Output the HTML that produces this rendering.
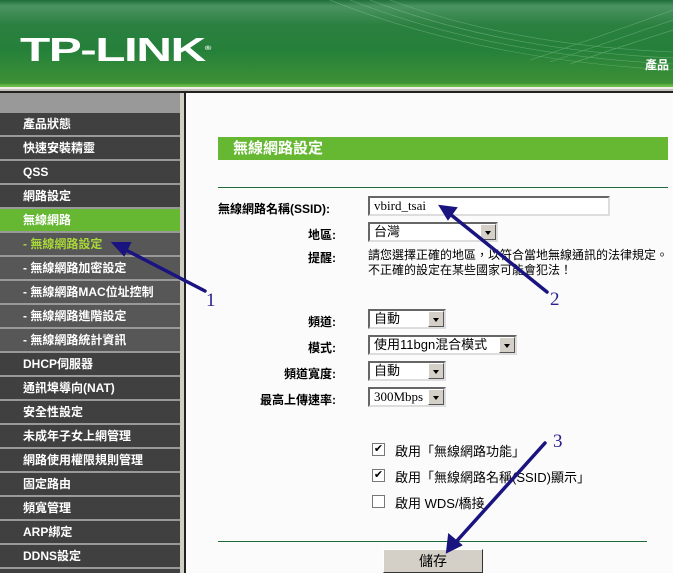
<!DOCTYPE html>
<html><head><meta charset="utf-8"><style>
*{margin:0;padding:0;box-sizing:border-box}
html{overflow:hidden;width:673px;height:573px}
body{width:673px;height:573px;overflow:hidden;background:#fbfbfb;font-family:"Liberation Sans","Noto Sans CJK TC",sans-serif;position:relative;font-size:13px}
.a{position:absolute}
#hdr{left:0;top:0;width:673px;height:87px;background:linear-gradient(#1f6f3a 0,#4b9462 6px,#2b8040 25px,#25803a 50px,#3d9135 83px,#6ec04a 86px)}
#logo{left:20px;top:33px;color:#fff;font:bold 33px/33px "Liberation Sans",sans-serif;transform:scaleX(1.5);transform-origin:left;letter-spacing:-1px}
#side{left:0;top:93px;width:180px;height:480px;background:#999}
.m{position:absolute;left:0;width:180px;height:22px;color:#fff;font-weight:bold;font-size:12px;line-height:22px;padding-left:23px;background:#404040}
.s{background:#575757}
.g{background:#66b833}
.lb{position:absolute;font-weight:bold;font-size:12px;text-align:right;width:140px;left:196px}
.sel{position:absolute;height:20px;background:#fff;font-size:13px;line-height:16px;padding-left:4px;border:2px solid;border-color:#666 #ddd #ddd #666}
.sel b{position:absolute;right:0;top:0;width:16px;height:16px;background:#d4d0c8;border:1px solid;border-color:#fff #555 #555 #fff}
.sel b:after{content:"";position:absolute;left:4px;top:6px;border:3.5px solid transparent;border-top:4px solid #000}
.cb{position:absolute;left:372px;width:13px;height:13px;border:1px solid #777;background:#fff;font-size:11px;line-height:11px;text-align:center}
.ct{position:absolute;left:395px;font-size:13px}
</style></head><body>
<div class="a" id="hdr"></div>
<svg class="a" style="left:330px;top:0" width="343" height="86"><g stroke="#8fc59a" stroke-width="0.6" fill="none" opacity=".5">
<path d="M0 0 Q150 60 343 70"/><path d="M20 0 Q160 55 343 64"/><path d="M40 0 Q170 50 343 58"/><path d="M60 0 Q180 45 343 52"/><path d="M343 10 Q260 40 200 60"/><path d="M343 20 Q270 45 220 62"/><path d="M343 30 Q280 50 240 64"/></g></svg>
<div class="a" id="logo">TP-LINK<span style="font-size:6px;vertical-align:top;letter-spacing:0">®</span></div>
<div class="a" style="left:645px;top:56px;color:#fff;font-weight:bold;font-size:12px">產品</div>
<div class="a" style="left:0;top:87px;width:673px;height:3px;background:#eee"></div>
<div class="a" style="left:0;top:89px;width:673px;height:2px;background:#c4c2b8"></div>
<div class="a" style="left:0;top:91px;width:673px;height:2px;background:#222"></div>
<div class="a" id="side"></div>
<div class="a" style="left:180px;top:93px;width:4px;height:480px;background:#cfcdc4"></div>
<div class="a" style="left:184px;top:93px;width:2px;height:480px;background:#222"></div>
<div class="m" style="top:113px">產品狀態</div>
<div class="m" style="top:137px">快速安裝精靈</div>
<div class="m" style="top:161px">QSS</div>
<div class="m" style="top:185px">網路設定</div>
<div class="m g" style="top:209px">無線網路</div>
<div class="m s" style="top:233px;color:#a8d838">- 無線網路設定</div>
<div class="m s" style="top:257px">- 無線網路加密設定</div>
<div class="m s" style="top:281px">- 無線網路MAC位址控制</div>
<div class="m s" style="top:305px">- 無線網路進階設定</div>
<div class="m s" style="top:329px">- 無線網路統計資訊</div>
<div class="m" style="top:353px">DHCP伺服器</div>
<div class="m" style="top:377px">通訊埠導向(NAT)</div>
<div class="m" style="top:401px">安全性設定</div>
<div class="m" style="top:425px">未成年子女上網管理</div>
<div class="m" style="top:449px">網路使用權限規則管理</div>
<div class="m" style="top:473px">固定路由</div>
<div class="m" style="top:497px">頻寬管理</div>
<div class="m" style="top:521px">ARP綁定</div>
<div class="m" style="top:545px">DDNS設定</div>
<div class="m" style="top:569px;height:4px"></div>
<div class="a" style="left:218px;top:137px;width:450px;height:23px;background:#66b833;color:#fff;font-weight:bold;font-size:15px;line-height:23px;padding-left:15px">無線網路設定</div>
<div class="a" style="left:218px;top:187px;width:450px;height:1px;background:#1f6a3a"></div>
<div class="lb" style="top:200px;left:218px;width:120px;text-align:left">無線網路名稱(SSID):</div>
<div class="sel" style="left:368px;top:196px;width:242px;font-family:'Liberation Serif',serif">vbird_tsai</div>
<div class="lb" style="top:226px">地區:</div>
<div class="sel" style="left:368px;top:222px;width:130px">台灣<b></b></div>
<div class="lb" style="top:249px">提醒:</div>
<div class="a" style="left:368px;top:248px;font-size:12px;line-height:15px">請您選擇正確的地區，以符合當地無線通訊的法律規定。<br>不正確的設定在某些國家可能會犯法！</div>
<div class="lb" style="top:313px">頻道:</div>
<div class="sel" style="left:368px;top:309px;width:78px">自動<b></b></div>
<div class="lb" style="top:339px">模式:</div>
<div class="sel" style="left:368px;top:335px;width:149px">使用11bgn混合模式<b></b></div>
<div class="lb" style="top:365px">頻道寬度:</div>
<div class="sel" style="left:368px;top:361px;width:78px">自動<b></b></div>
<div class="lb" style="top:391px">最高上傳速率:</div>
<div class="sel" style="left:368px;top:387px;width:78px;font-family:'Liberation Serif',serif">300Mbps<b></b></div>
<div class="cb" style="top:443px">✔</div><div class="ct" style="top:441px">啟用「無線網路功能」</div>
<div class="cb" style="top:469px">✔</div><div class="ct" style="top:467px">啟用「無線網路名稱(SSID)顯示」</div>
<div class="cb" style="top:495px"></div><div class="ct" style="top:493px">啟用 WDS/橋接</div>
<div class="a" style="left:218px;top:541px;width:429px;height:1px;background:#1f6a3a"></div>
<div class="a" style="left:383px;top:549px;width:100px;height:24px;background:#d4d0c8;border:1px solid;border-color:#fff #333 #333 #fff;text-align:center;font-size:14px;line-height:22px">儲存</div>
<svg class="a" style="left:0;top:0" width="673" height="573"><g stroke="#1a1480" stroke-width="3.5" fill="#1a1480" stroke-linecap="round">
<line x1="205" y1="291" x2="122" y2="248"/><path d="M113 243 L130 243 L124 255Z" stroke-width="2"/>
<line x1="547" y1="292" x2="450" y2="214"/><path d="M440 206 L456 208 L448 219Z" stroke-width="2"/>
<line x1="545" y1="443" x2="455" y2="543"/><path d="M447 552 L449 535 L461 545Z" stroke-width="2"/>
</g><g fill="#2a2090" font-family="Liberation Serif,serif" font-size="19"><text x="206" y="306">1</text><text x="550" y="305">2</text><text x="553" y="447">3</text></g></svg>
</body></html>
